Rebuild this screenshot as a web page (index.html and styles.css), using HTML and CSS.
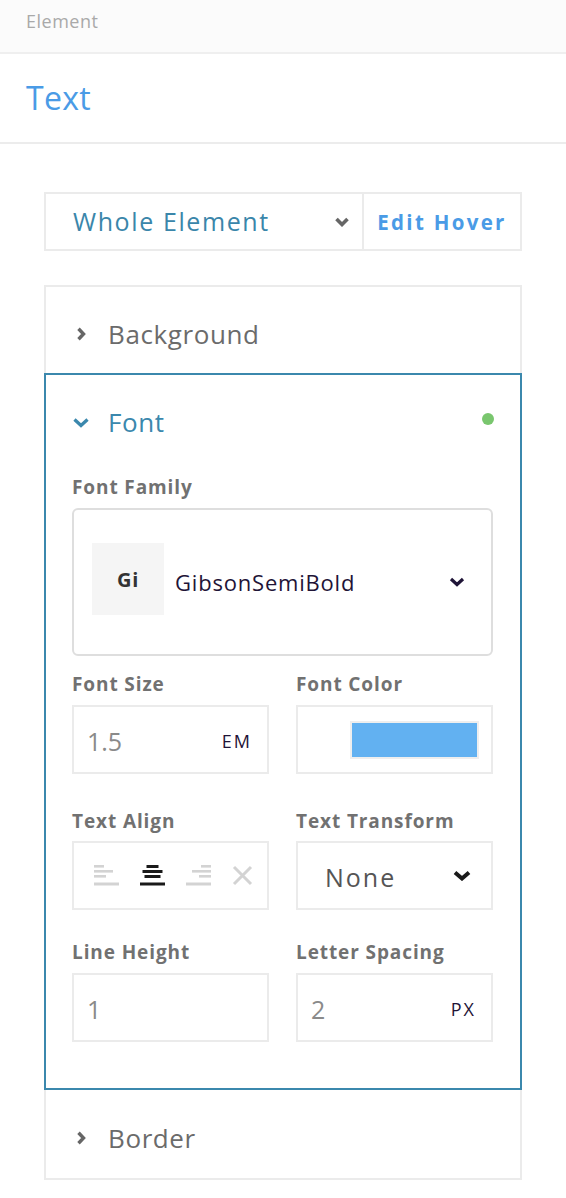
FILE: index.html
```html
<!DOCTYPE html>
<html>
<head>
<meta charset="utf-8">
<link rel="stylesheet" href="styles.css">
</head>
<body>
<div class="topbar">Element</div>
<div class="titlebar">Text</div>
<div class="main">
  <div class="selector">
    <div class="sel-left">
      <span class="sel-text">Whole Element</span>
      <svg class="sel-chev" width="16" height="10" viewBox="0 0 16 10"><path d="M2.5 2 L8 7.5 L13.5 2" fill="none" stroke="#666" stroke-width="3.6"/></svg>
    </div>
    <div class="sel-right">Edit Hover</div>
  </div>

  <div class="accordion">
    <div class="acc-item">
      <div class="acc-head">
        <svg class="acc-icon" width="16" height="14" viewBox="0 0 16 14"><path d="M5.5 1.8 L10.5 7 L5.5 12.2" fill="none" stroke="#666" stroke-width="3.4"/></svg>
        <span class="acc-title">Background</span>
      </div>
    </div>
    <div class="acc-item open">
      <div class="acc-head">
        <svg class="acc-icon" width="16" height="14" viewBox="0 0 16 14"><path d="M1.5 3.5 L8 9.5 L14.5 3.5" fill="none" stroke="#3b88ad" stroke-width="3.3"/></svg>
        <span class="acc-title">Font</span>
        <span class="dot"></span>
      </div>
      <div class="acc-body">
        <div class="field row-family">
          <div class="label">Font Family</div>
          <div class="family-box">
            <div class="family-preview">Gi</div>
            <span class="family-name">GibsonSemiBold</span>
            <svg class="family-chev" width="16" height="10" viewBox="0 0 16 10"><path d="M2 2 L8 7.5 L14 2" fill="none" stroke="#1f1437" stroke-width="3.2"/></svg>
          </div>
        </div>
        <div class="grid row-size">
          <div class="field">
            <div class="label">Font Size</div>
            <div class="input"><span class="val">1.5</span><span class="unit">EM</span></div>
          </div>
          <div class="field">
            <div class="label">Font Color</div>
            <div class="input color-input"><span class="swatch"></span></div>
          </div>
        </div>
        <div class="grid row-align">
          <div class="field">
            <div class="label">Text Align</div>
            <div class="input align-input">
              <svg width="25" height="21" viewBox="0 0 25 21"><g fill="#d3d3d3"><rect x="0" y="0" width="10" height="2.6"/><rect x="0" y="5" width="19" height="2.6"/><rect x="0" y="10" width="12" height="2.6"/><rect x="0" y="17.5" width="25" height="3"/></g></svg>
              <svg width="25" height="21" viewBox="0 0 25 21"><g fill="#1a1a1a"><rect x="6.5" y="0" width="12" height="3"/><rect x="2.5" y="5" width="20" height="3"/><rect x="4.5" y="10" width="16" height="3"/><rect x="0" y="17.5" width="25" height="3"/></g></svg>
              <svg width="25" height="21" viewBox="0 0 25 21"><g fill="#d3d3d3"><rect x="15" y="0" width="10" height="2.6"/><rect x="6" y="5" width="19" height="2.6"/><rect x="13" y="10" width="12" height="2.6"/><rect x="0" y="17.5" width="25" height="3"/></g></svg>
              <svg width="21" height="21" viewBox="0 0 21 21"><path d="M2 2 L19 19 M19 2 L2 19" stroke="#d3d3d3" stroke-width="3"/></svg>
            </div>
          </div>
          <div class="field">
            <div class="label">Text Transform</div>
            <div class="input select-input"><span class="sel-val">None</span>
              <svg width="20" height="11" viewBox="0 0 20 11"><path d="M3 2.5 L10 8.5 L17 2.5" fill="none" stroke="#1a1a1a" stroke-width="4"/></svg>
            </div>
          </div>
        </div>
        <div class="grid row-line">
          <div class="field">
            <div class="label">Line Height</div>
            <div class="input"><span class="val">1</span></div>
          </div>
          <div class="field">
            <div class="label">Letter Spacing</div>
            <div class="input"><span class="val">2</span><span class="unit">PX</span></div>
          </div>
        </div>
      </div>
    </div>
    <div class="acc-item last">
      <div class="acc-head">
        <svg class="acc-icon" width="16" height="14" viewBox="0 0 16 14"><path d="M5.5 1.8 L10.5 7 L5.5 12.2" fill="none" stroke="#666" stroke-width="3.4"/></svg>
        <span class="acc-title">Border</span>
      </div>
    </div>
  </div>
</div>
</body>
</html>
```
FILE: styles.css
```css
* { box-sizing: border-box; }
html, body { margin: 0; padding: 0; background: #fff; }
body { font-family: "Open Sans", "DejaVu Sans", sans-serif; }

.topbar {
  height: 54px;
  background: #fbfbfb;
  border-bottom: 2px solid #efefef;
  padding: 12px 26px 0;
  font-size: 18px;
  line-height: 18px;
  letter-spacing: 0.5px;
  color: #a9a9a9;
}
.titlebar {
  height: 90px;
  border-bottom: 2px solid #ececec;
  padding: 28px 26px 0;
  font-size: 32px;
  line-height: 32px;
  color: #4a9be6;
  letter-spacing: 0.3px;
}
.main { padding: 48px 44px 0; }

.selector {
  display: flex;
  height: 59px;
  border: 2px solid #ebebeb;
}
.sel-left {
  width: 318px;
  border-right: 2px solid #ebebeb;
  display: flex;
  align-items: center;
  padding-left: 27px;
  padding-right: 12px;
}
.sel-text {
  flex: 1;
  font-size: 25px;
  line-height: 25px;
  letter-spacing: 1.6px;
  color: #3a86aa;
}
.sel-right {
  flex: 1;
  display: flex;
  align-items: center;
  justify-content: center;
  font-size: 20.5px;
  font-weight: 700;
  letter-spacing: 2.3px;
  color: #4a9be6;
}

.accordion { margin-top: 34px; }
.acc-item {
  border: 2px solid #ebebeb;
  border-bottom: none;
}
.acc-item.open { border: 2px solid #3b88ad; }
.acc-item.last { border-top: none; border-bottom: 2px solid #ebebeb; }
.acc-head {
  display: flex;
  align-items: center;
  height: 86px;
  padding: 8px 26px 0 27px;
}
.acc-item.last .acc-head { height: 88px; }
.acc-item.open .acc-head { height: 60px; padding-top: 34px; align-items: flex-start; }
.acc-item.open .acc-icon { margin-top: 7px; }
.acc-icon { margin-right: 19px; flex: none; }
.acc-title {
  flex: 1;
  font-size: 26px;
  line-height: 26px;
  letter-spacing: 0.6px;
  color: #6b6b6b;
}
.acc-item.open .acc-title { color: #3b88ad; }
.dot {
  width: 12px;
  height: 12px;
  border-radius: 50%;
  background: #79c66e;
  margin-top: 4px;
  margin-right: 0;
}

.acc-body { padding: 0 27px 46px 26px; }
.label {
  font-size: 19px;
  line-height: 20px;
  font-weight: 700;
  letter-spacing: 0.9px;
  color: #717171;
  margin-bottom: 11px;
}
.row-family { margin-top: 42px; }
.row-size { margin-top: 18px; }
.row-align { margin-top: 37px; }
.row-line { margin-top: 32px; }
.row-align .label { margin-bottom: 10px; }

.family-box {
  height: 148px;
  border: 2px solid #dedede;
  border-radius: 6px;
  display: flex;
  align-items: center;
  padding: 0 26px 0 18px;
}
.family-preview {
  width: 72px;
  height: 72px;
  background: #f5f5f5;
  display: flex;
  align-items: center;
  justify-content: center;
  font-size: 20px;
  font-weight: 700;
  letter-spacing: 0.8px;
  color: #333;
  margin-top: -6px;
}
.family-name {
  flex: 1;
  margin-left: 11px;
  font-size: 22px;
  letter-spacing: 0.8px;
  color: #1f1437;
}
.family-chev { flex: none; }

.grid {
  display: grid;
  grid-template-columns: 197px 197px;
  column-gap: 27px;
}
.input {
  height: 69px;
  border: 2px solid #ebebeb;
  display: flex;
  align-items: center;
  padding: 0 15px 0 13px;
}
.val {
  flex: 1;
  font-size: 25px;
  line-height: 25px;
  color: #8a8a8a;
  margin-top: 3px;
}
.unit {
  font-size: 18px;
  letter-spacing: 2px;
  color: #1f1437;
  margin-top: 2px;
}
.color-input { justify-content: flex-end; padding-right: 12px; }
.swatch {
  width: 129px;
  height: 38px;
  background: #62b1f1;
  border: 2px solid #eeeeee;
}
.align-input {
  padding-left: 20px;
  gap: 21px;
}
.align-input svg { flex: none; }
.select-input { padding-left: 27px; padding-right: 19px; }
.sel-val {
  flex: 1;
  font-size: 25px;
  line-height: 25px;
  letter-spacing: 2px;
  color: #555;
  margin-top: 4px;
}
```
